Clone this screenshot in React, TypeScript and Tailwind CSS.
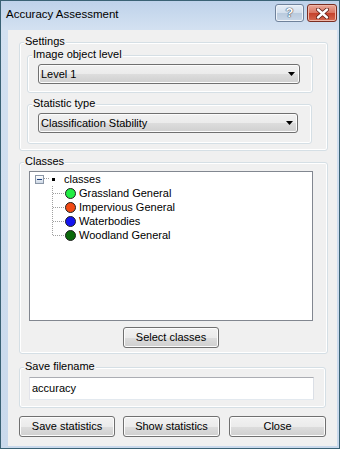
import React from "react";

function Btn({ children, className = "" }: { children: React.ReactNode; className?: string }) {
  return (
    <button
      className={`h-[21px] rounded-[3px] border border-[#707070] bg-[linear-gradient(#f2f2f2_0%,#ebebeb_50%,#dddddd_50%,#cfcfcf_100%)] shadow-[inset_0_0_0_1px_#fcfcfc] text-[11px] leading-[13px] text-black ${className}`}
    >
      {children}
    </button>
  );
}

function Group({ label, className = "", children }: { label: string; className?: string; children?: React.ReactNode }) {
  return (
    <div className={`relative rounded-[3px] border border-[#d5dfe5] shadow-[inset_0_0_0_1px_#ffffff] ${className}`}>
      <span className="absolute left-[4px] top-[-8px] bg-[#f0f0f0] px-[1px] text-[11px] leading-[13px] text-black">
        {label}
      </span>
      {children}
    </div>
  );
}

function Combo({ text, className = "" }: { text: string; className?: string }) {
  return (
    <div
      className={`flex h-[20px] items-center justify-between rounded-[3px] border border-[#707070] bg-[linear-gradient(#f2f2f2_0%,#ebebeb_50%,#dddddd_50%,#cfcfcf_100%)] shadow-[inset_0_0_0_1px_#fcfcfc] pl-[2px] pr-[4px] text-[11px] leading-[13px] text-black ${className}`}
    >
      <span>{text}</span>
      <svg width="7" height="4" viewBox="0 0 7 4">
        <path d="M0 0H7L3.5 4Z" fill="#000" />
      </svg>
    </div>
  );
}

const classes = [
  { name: "Grassland General", color: "#22ee44" },
  { name: "Impervious General", color: "#f24a14" },
  { name: "Waterbodies", color: "#1414f0" },
  { name: "Woodland General", color: "#0b6a0b" },
];

export default function App() {
  return (
    <div className="flex h-[449px] w-[340px] flex-col border border-[#3a6275] bg-[linear-gradient(180deg,#bed2ea_0px,#d3e1f1_28px,#c9d9ec_100%)] font-['Liberation_Sans',Arial,sans-serif] text-black">
      {/* Title bar */}
      <div className="flex h-[29px] items-start justify-between pl-[5px] pr-[2px]">
        <span className="mt-[6px] text-[11.5px] leading-[14px] text-black">Accuracy Assessment</span>
        <div className="mt-[3px] flex gap-[3px]">
          <div className="flex h-[18px] w-[29px] items-center justify-center rounded-[3px] border border-[#6f829b] bg-[linear-gradient(#e6eef7_0%,#d3dfec_50%,#b9cadd_50%,#c9d7e7_100%)] shadow-[inset_0_0_0_1px_#eef3f9]">
            <span className="text-[13px] font-bold leading-[14px] text-white [text-shadow:0_0_1px_#3a4a60,0_0_1px_#3a4a60,0_0_1px_#3a4a60]">
              ?
            </span>
          </div>
          <div className="flex h-[18px] w-[30px] items-center justify-center rounded-[3px] border border-[#7a2e22] bg-[linear-gradient(#e9a99a_0%,#d9735f_50%,#c4402a_50%,#d56a50_100%)] shadow-[inset_0_0_0_1px_#efb8aa]">
            <svg width="13" height="11" viewBox="0 0 13 11">
              <path d="M2 1.5L11 9.5M11 1.5L2 9.5" stroke="#5a1a12" strokeWidth="4" strokeLinecap="round" />
              <path d="M2 1.5L11 9.5M11 1.5L2 9.5" stroke="#ffffff" strokeWidth="2.4" strokeLinecap="round" />
            </svg>
          </div>
        </div>
      </div>

      {/* Client area */}
      <div className="ml-[7px] mr-[2px] mb-[2px] flex flex-1 flex-col bg-[#f0f0f0] pl-[11px] text-[11px] leading-[13px]">
        {/* Settings */}
        <Group label="Settings" className="mt-[12px] flex h-[109px] w-[309px] flex-col pl-[7px] pt-[12px]">
          <Group label="Image object level" className="h-[38px] w-[286px] pl-[10px] pt-[8px]">
            <Combo text="Level 1" className="w-[262px]" />
          </Group>
          <Group label="Statistic type" className="mt-[11px] h-[40px] w-[285px] pl-[10px] pt-[8px]">
            <Combo text="Classification Stability" className="w-[260px]" />
          </Group>
        </Group>

        {/* Classes */}
        <Group label="Classes" className="mt-[11px] flex h-[192px] w-[309px] flex-col pl-[9px] pt-[8px]">
          <div className="relative h-[150px] w-[284px] border border-[#828790] bg-white">
            <svg className="absolute left-0 top-0" width="282" height="148">
              <g stroke="#a0a0a0" strokeWidth="1" strokeDasharray="1 1" shapeRendering="crispEdges">
                <line x1="14" y1="6.5" x2="20" y2="6.5" />
                <line x1="22.5" y1="14" x2="22.5" y2="63" />
                <line x1="22.5" y1="21.5" x2="35" y2="21.5" />
                <line x1="22.5" y1="35.5" x2="35" y2="35.5" />
                <line x1="22.5" y1="49.5" x2="35" y2="49.5" />
                <line x1="22.5" y1="63.5" x2="35" y2="63.5" />
              </g>
            </svg>
            <div className="relative flex h-[14px] items-center">
              <div className="ml-[5px] flex h-[9px] w-[9px] items-center justify-center border border-[#8a96a6] bg-[linear-gradient(#ffffff,#cdd8e6)]">
                <div className="h-[1px] w-[5px] bg-[#1d3f7c]" />
              </div>
              <div className="ml-[8px] h-[3px] w-[3px] bg-black" />
              <span className="ml-[9px]">classes</span>
            </div>
            {classes.map((c) => (
              <div key={c.name} className="relative flex h-[14px] items-center">
                <div
                  className="ml-[35px] h-[11px] w-[11px] rounded-full border border-[#202020]"
                  style={{ backgroundColor: c.color }}
                />
                <span className="ml-[3px]">{c.name}</span>
              </div>
            ))}
          </div>
          <Btn className="ml-[94px] mt-[6px] w-[96px]">Select classes</Btn>
        </Group>

        {/* Save filename */}
        <Group label="Save filename" className="mt-[13px] h-[41px] w-[307px] pl-[9px] pt-[9px]">
          <div className="flex h-[23px] w-[285px] items-center border border-[#abadb3] border-b-[#e3e9ef] border-l-[#e2e3ea] border-r-[#dbdfe6] bg-white pl-[2px]">
            accuracy
          </div>
        </Group>

        {/* Bottom buttons */}
        <div className="mt-[8px] flex">
          <Btn className="w-[96px]">Save statistics</Btn>
          <Btn className="ml-[8px] w-[97px]">Show statistics</Btn>
          <Btn className="ml-[9px] w-[97px]">Close</Btn>
        </div>
      </div>
    </div>
  );
}
